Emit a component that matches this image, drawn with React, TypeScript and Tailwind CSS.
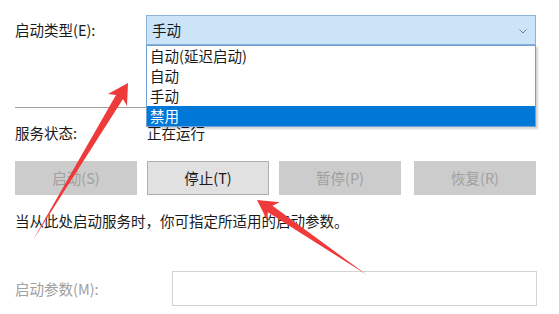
const font = { fontFamily: '"Noto Sans CJK SC", "Noto Sans", sans-serif' };

function Btn({ label, disabled, className = '' }: { label: string; disabled?: boolean; className?: string }) {
  return (
    <div
      className={
        'flex h-[34px] w-[122px] items-center justify-center border text-[14.5px] ' +
        (disabled ? 'border-[#cccccc] bg-[#cccccc] text-[#a0a0a0]' : 'border-[#adadad] bg-[#e1e1e1] text-[#1a1a1a]') +
        ' ' +
        className
      }
    >
      {label}
    </div>
  );
}

export default function App() {
  const options = ['自动(延迟启动)', '自动', '手动', '禁用'];

  return (
    <div className="relative h-[314px] w-[559px] overflow-hidden bg-white pl-[15px] pt-[15px] text-[#1a1a1a]" style={font}>
      {/* startup type */}
      <div className="flex h-[30px] items-center">
        <div className="w-[131px] text-[14.5px]">启动类型(E):</div>
        <div className="relative flex h-[30px] w-[390px] items-center justify-between border border-[#8db2d9] bg-[#cce4f7] pl-[5px] pr-[8px]">
          <span className="text-[14.5px]">手动</span>
          <svg width="8" height="5" viewBox="0 0 8 5" className="mt-[2px]">
            <path d="M0.5 0.5 L4 4 L7.5 0.5" fill="none" stroke="#7a7a7a" strokeWidth="1" />
          </svg>
          {/* open list */}
          <div className="absolute left-[-1px] top-[29px] z-10 w-[390px] border border-[#6fa1d8] bg-white shadow-[2px_2px_2px_rgba(0,0,0,0.18)]">
            {options.map((o) => (
              <div
                key={o}
                className={
                  'flex h-[20px] items-center pl-[3px] text-[14.5px] leading-none ' +
                  (o === '禁用' ? 'bg-[#0078d7] text-white' : 'text-[#1a1a1a]')
                }
              >
                {o}
              </div>
            ))}
          </div>
        </div>
      </div>

      <div className="mt-[62px] h-px w-[521px] bg-[#a0a0a0]" />

      {/* status */}
      <div className="mt-[15px] flex h-[20px] items-center text-[14.5px]">
        <div className="w-[132px]">服务状态:</div>
        <div>正在运行</div>
      </div>

      {/* buttons */}
      <div className="mt-[18px] flex">
        <Btn label="启动(S)" disabled />
        <Btn label="停止(T)" className="ml-[10px]" />
        <Btn label="暂停(P)" disabled className="ml-[10px]" />
        <Btn label="恢复(R)" disabled className="ml-[13px]" />
      </div>

      <div className="mt-[16px] flex h-[20px] items-center text-[14.5px]">当从此处启动服务时，你可指定所适用的启动参数。</div>

      {/* params */}
      <div className="mt-[40px] flex items-center">
        <div className="w-[157px] text-[14.5px] text-[#a0a0a0]">启动参数(M):</div>
        <div className="h-[35px] w-[365px] border border-[#d4d4d4] bg-white" />
      </div>

      {/* annotation arrows */}
      <svg className="pointer-events-none absolute left-0 top-0 z-20" width="559" height="314" viewBox="0 0 559 314">
        <polygon points="128,83 127,106 123,99 33,240 116,95 108,94" fill="#ee3a3a" />
        <polygon points="257,200 279.7,202.2 272.5,205.7 367,275 267.9,212.3 267.3,220.4" fill="#ee3a3a" />
      </svg>
    </div>
  );
}
